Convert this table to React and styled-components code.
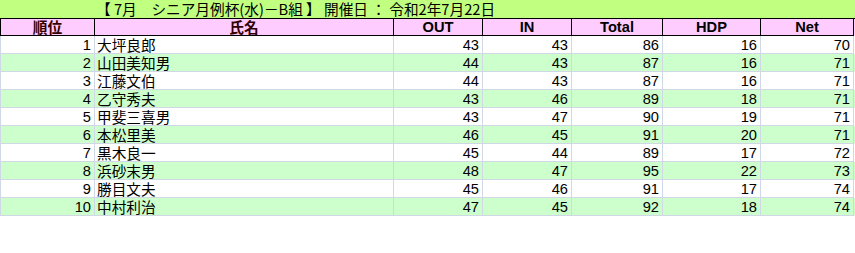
import React from "react";
import styled, { createGlobalStyle } from "styled-components";

const Global = createGlobalStyle`
  html, body { margin: 0; padding: 0; background: #fff; }
  body { font-family: "Noto Sans CJK JP", "Liberation Sans", sans-serif; }
`;

const COLS = "95px 299px 89px 89px 91px 98px 93px";

const Page = styled.div`
  width: 855px;
`;

const TitleBar = styled.div`
  height: 18px;
  background: #c0ff80;
  display: flex;
  align-items: center;
  padding-left: 96px;
  font-size: 14.67px;
  color: #000;
  white-space: pre;
  line-height: 16px;
`;

const HeaderRow = styled.div`
  display: grid;
  grid-template-columns: ${COLS};
  height: 18px;
  box-sizing: border-box;
  border-top: 1px solid #000;
  background: #ffccff;
`;

const HeadCell = styled.div`
  box-sizing: border-box;
  border-right: 1px solid #000;
  border-bottom: 1px solid #000;
  ${(p) => (p.$first ? "border-left: 1px solid #000;" : "")}
  display: flex;
  align-items: center;
  justify-content: center;
  font-weight: bold;
  font-size: 14.67px;
  line-height: 16px;
  color: ${(p) => (p.$cjk ? "#300000" : "#000")};
  font-family: ${(p) =>
    p.$cjk ? `"Noto Sans CJK JP", sans-serif` : `"Liberation Sans", Arial, sans-serif`};
`;

const Row = styled.div`
  display: grid;
  grid-template-columns: ${COLS};
  height: 18px;
  background: ${(p) => (p.$alt ? "#ccffcc" : "#ffffff")};
`;

const Cell = styled.div`
  box-sizing: border-box;
  border-right: 1px solid #d0d7e5;
  border-bottom: 1px solid #d0d7e5;
  ${(p) => (p.$first ? "border-left: 1px solid #d0d7e5;" : "")}
  display: flex;
  align-items: center;
  justify-content: ${(p) => (p.$left ? "flex-start" : "flex-end")};
  padding: ${(p) => (p.$left ? "0 0 0 2px" : "1px 3px 0 0")};
  font-size: 14.67px;
  line-height: 16px;
  color: #000;
  font-family: ${(p) =>
    p.$left
      ? `"Noto Sans CJK JP", "Liberation Sans", sans-serif`
      : `"Liberation Sans", Arial, sans-serif`};
  white-space: nowrap;
`;

const rows = [
  [1, "大坪良郎", 43, 43, 86, 16, 70],
  [2, "山田美知男", 44, 43, 87, 16, 71],
  [3, "江藤文伯", 44, 43, 87, 16, 71],
  [4, "乙守秀夫", 43, 46, 89, 18, 71],
  [5, "甲斐三喜男", 43, 47, 90, 19, 71],
  [6, "本松里美", 46, 45, 91, 20, 71],
  [7, "黒木良一", 45, 44, 89, 17, 72],
  [8, "浜砂末男", 48, 47, 95, 22, 73],
  [9, "勝目文夫", 45, 46, 91, 17, 74],
  [10, "中村利治", 47, 45, 92, 18, 74],
];

export default function App() {
  return (
    <Page>
      <Global />
      <TitleBar>【 7月　シニア月例杯(水)－B組 】 開催日 ： 令和2年7月22日</TitleBar>
      <HeaderRow>
        <HeadCell $first $cjk>順位</HeadCell>
        <HeadCell $cjk>氏名</HeadCell>
        <HeadCell>OUT</HeadCell>
        <HeadCell>IN</HeadCell>
        <HeadCell>Total</HeadCell>
        <HeadCell>HDP</HeadCell>
        <HeadCell>Net</HeadCell>
      </HeaderRow>
      {rows.map((r, i) => (
        <Row key={r[0]} $alt={i % 2 === 1}>
          <Cell $first>{r[0]}</Cell>
          <Cell $left>{r[1]}</Cell>
          <Cell>{r[2]}</Cell>
          <Cell>{r[3]}</Cell>
          <Cell>{r[4]}</Cell>
          <Cell>{r[5]}</Cell>
          <Cell>{r[6]}</Cell>
        </Row>
      ))}
    </Page>
  );
}
